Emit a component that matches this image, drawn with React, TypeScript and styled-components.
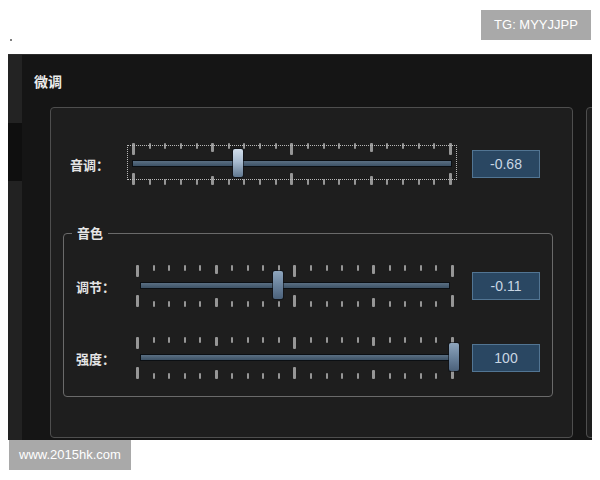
import styled, { createGlobalStyle } from "styled-components";

const GlobalStyle = createGlobalStyle`
  html, body {
    margin: 0;
    padding: 0;
    background: #ffffff;
  }
  body {
    font-family: "Noto Sans CJK SC", "Liberation Sans", sans-serif;
  }
`;

const Page = styled.div`
  width: 600px;
  height: 480px;
  overflow: hidden;
  display: flex;
  flex-direction: column;
`;

const TopStrip = styled.div`
  height: 54px;
  box-sizing: border-box;
  padding: 10px 9px 0 10px;
  display: flex;
  justify-content: space-between;
  align-items: flex-start;
`;

const Speck = styled.span`
  width: 2px;
  height: 2px;
  margin-top: 29px;
  background: #555;
  border-radius: 1px;
`;

const Watermark = styled.div<{ $w: number }>`
  width: ${(p) => p.$w}px;
  height: 30px;
  background: #a9a9a9;
  color: #ffffff;
  font-family: "Liberation Sans", Arial, sans-serif;
  font-size: 13px;
  line-height: 30px;
  text-align: center;
  flex-shrink: 0;
`;

const BottomMark = styled(Watermark)`
  margin-left: 9px;
`;

const Window = styled.div`
  margin: 0 8px;
  height: 386px;
  box-sizing: border-box;
  border-top: 1px solid #2c2c2c;
  display: flex;
  background: #151515;
  overflow: hidden;
`;

const Sidebar = styled.div`
  width: 14px;
  display: flex;
  flex-direction: column;
  flex-shrink: 0;
`;

const SideBlock = styled.div<{ $h?: number; $tone: string }>`
  background: ${(p) => p.$tone};
  ${(p) => (p.$h ? `height: ${p.$h}px;` : "flex: 1;")}
`;

const Main = styled.div`
  flex: 1;
  display: flex;
  flex-direction: column;
  min-width: 0;
`;

const Header = styled.div`
  height: 52px;
  display: flex;
  align-items: center;
  padding-left: 12px;
  color: #ececec;
  font-size: 14px;
  font-weight: 700;
`;

const Body = styled.div`
  flex: 1;
  display: flex;
  gap: 13px;
  padding-left: 28px;
  align-items: flex-start;
`;

const GroupBox = styled.div<{ $w: number }>`
  width: ${(p) => p.$w}px;
  height: 331px;
  flex-shrink: 0;
  box-sizing: border-box;
  border: 1px solid #4e4e4e;
  border-radius: 4px;
  background: #1e1e1e;
  padding: 35px 19px 0 12px;
`;

const Fieldset = styled.fieldset`
  margin: 41px 0 0 0;
  padding: 25px 12px 17px 12px;
  border: 1px solid #6a6a6a;
  border-radius: 4px;
  min-width: 0;
`;

const Legend = styled.legend`
  margin-left: -4px;
  padding: 0 5px;
  font-size: 13px;
  line-height: 14px;
  font-weight: 700;
  color: #e6e6e6;
`;

const Rows = styled.div`
  display: flex;
  flex-direction: column;
  gap: 30px;
`;

const Row = styled.div<{ $label: number; $slider: number; $gap: number; $indent?: number }>`
  display: grid;
  grid-template-columns: ${(p) => p.$label}px ${(p) => p.$slider}px 68px;
  column-gap: ${(p) => p.$gap}px;
  align-items: center;
  padding-left: ${(p) => p.$indent ?? 0}px;
`;

const Label = styled.span`
  font-size: 13px;
  font-weight: 700;
  color: #e4e4e4;
  white-space: nowrap;
`;

const SliderWrap = styled.div`
  position: relative;
  height: 42px;
  display: flex;
  flex-direction: column;
`;

const TickRow = styled.div<{ $bottom?: boolean }>`
  height: 14px;
  padding: 0 5px;
  display: flex;
  justify-content: space-between;
  align-items: ${(p) => (p.$bottom ? "flex-end" : "flex-start")};
  margin-top: ${(p) => (p.$bottom ? 4 : 0)}px;
`;

const Tick = styled.span<{ $size: "tall" | "mid" | "small" }>`
  width: ${(p) => (p.$size === "small" ? 2 : 3)}px;
  height: ${(p) => (p.$size === "tall" ? 12 : p.$size === "mid" ? 9 : 6)}px;
  background: #969696;
  border-radius: 1px;
`;

const Track = styled.div<{ $inset: number }>`
  height: 7px;
  margin: 3px ${(p) => p.$inset}px 0;
  box-sizing: border-box;
  border: 1px solid #0b0f13;
  background: linear-gradient(to bottom, #5a6f83, #3d5266);
`;

const Thumb = styled.div<{ $bright?: boolean }>`
  position: absolute;
  top: 6px;
  width: 10px;
  height: 28px;
  border-radius: 2px;
  background: ${(p) =>
    p.$bright
      ? "linear-gradient(to bottom, #d2deeb, #a9bcd0 45%, #60778f)"
      : "linear-gradient(to bottom, #8ea5bd, #6a839d 50%, #4b617a)"};
  box-shadow: 0 0 0 1px rgba(10, 14, 20, 0.6);
`;

const FocusFrame = styled.div`
  position: absolute;
  left: 0;
  right: 0;
  top: 2px;
  bottom: 5px;
  border: 1px dotted #b8b8b8;
  pointer-events: none;
`;

const ValueBox = styled.div`
  height: 28px;
  box-sizing: border-box;
  border: 1px solid #527593;
  background: #2a4762;
  color: #c9d6e3;
  font-family: "Liberation Sans", Arial, sans-serif;
  font-size: 14px;
  line-height: 26px;
  text-align: center;
`;

const tickSize = (i: number): "tall" | "mid" | "small" =>
  i % 10 === 0 ? "tall" : i % 5 === 0 ? "mid" : "small";

function Ticks({ bottom }: { bottom?: boolean }) {
  return (
    <TickRow $bottom={bottom}>
      {Array.from({ length: 21 }, (_, i) => (
        <Tick key={i} $size={tickSize(i)} />
      ))}
    </TickRow>
  );
}

type SliderProps = {
  width: number;
  min: number;
  max: number;
  value: number;
  trackInset?: number;
  focused?: boolean;
  bright?: boolean;
};

function Slider({ width, min, max, value, trackInset = 5, focused, bright }: SliderProps) {
  const frac = (value - min) / (max - min);
  const left = 5 + frac * (width - 10) - 5;
  return (
    <SliderWrap>
      <Ticks />
      <Track $inset={trackInset} />
      <Ticks bottom />
      <Thumb $bright={bright} style={{ left }} />
      {focused && <FocusFrame />}
    </SliderWrap>
  );
}

export default function App() {
  return (
    <Page>
      <GlobalStyle />
      <TopStrip>
        <Speck />
        <Watermark $w={110}>TG: MYYJJPP</Watermark>
      </TopStrip>
      <Window>
        <Sidebar>
          <SideBlock $h={68} $tone="#232323" />
          <SideBlock $h={58} $tone="#0f0f0f" />
          <SideBlock $tone="#222222" />
        </Sidebar>
        <Main>
          <Header>微调</Header>
          <Body>
            <GroupBox $w={523}>
              <Row $label={42} $slider={330} $gap={15} $indent={7}>
                <Label>音调：</Label>
                <Slider width={330} min={-2} max={2} value={-0.68} focused bright />
                <ValueBox>-0.68</ValueBox>
              </Row>
              <Fieldset>
                <Legend>音色</Legend>
                <Rows>
                  <Row $label={42} $slider={328} $gap={13}>
                    <Label>调节：</Label>
                    <Slider width={328} min={-1} max={1} value={-0.11} trackInset={9} />
                    <ValueBox>-0.11</ValueBox>
                  </Row>
                  <Row $label={42} $slider={328} $gap={13}>
                    <Label>强度：</Label>
                    <Slider width={328} min={0} max={100} value={100} trackInset={9} />
                    <ValueBox>100</ValueBox>
                  </Row>
                </Rows>
              </Fieldset>
            </GroupBox>
            <GroupBox $w={40} />
          </Body>
        </Main>
      </Window>
      <BottomMark $w={122}>www.2015hk.com</BottomMark>
    </Page>
  );
}
